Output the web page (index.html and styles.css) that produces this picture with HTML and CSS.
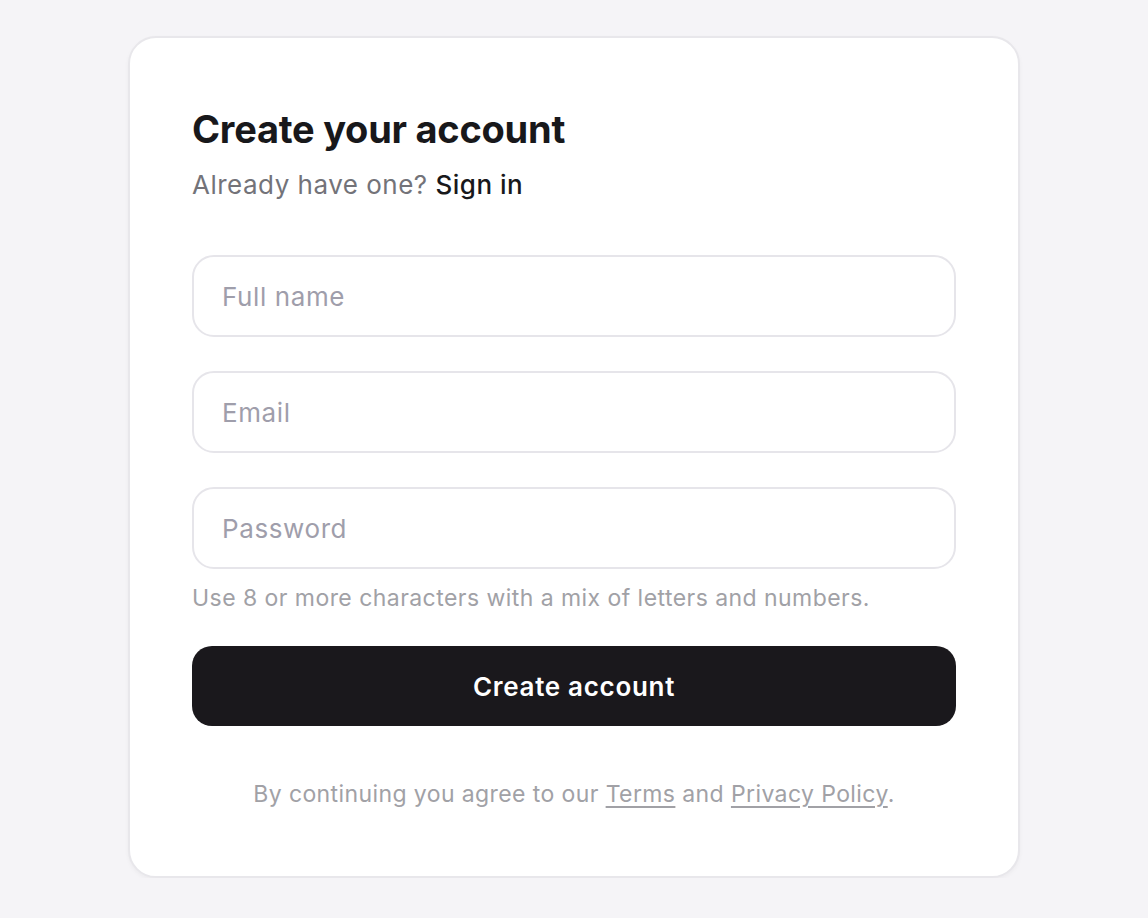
FILE: index.html
```html
<!DOCTYPE html>
<html lang="en">
<head>
<meta charset="utf-8">
<title>Create your account</title>
<link rel="stylesheet" href="styles.css">
</head>
<body>
<main class="card">
  <h1 class="title">Create your account</h1>
  <p class="subtitle">Already have one? <a class="signin" href="#">Sign in</a></p>
  <form class="form">
    <input class="field" type="text" placeholder="Full name">
    <input class="field" type="email" placeholder="Email">
    <div class="password-group">
      <input class="field" type="password" placeholder="Password">
      <p class="hint">Use 8 or more characters with a mix of letters and numbers.</p>
    </div>
    <button class="submit" type="button">Create account</button>
  </form>
  <p class="legal">By continuing you agree to our <a href="#">Terms</a> and <a href="#">Privacy Policy</a>.</p>
</main>
</body>
</html>
```
FILE: styles.css
```css
* { box-sizing: border-box; }
html, body { margin: 0; padding: 0; }
body {
  background: #f5f4f7;
  font-family: Inter, "Noto Sans", sans-serif;
  color: #18181b;
  -webkit-font-smoothing: antialiased;
}
.card {
  width: 892px;
  height: 842px;
  margin: 36px auto 0;
  background: #ffffff;
  border: 2px solid #e8e7eb;
  border-radius: 28px;
  padding: 68px 62px 0;
  box-shadow: 0 2px 4px rgba(20, 20, 30, 0.04);
}
.title {
  margin: 0;
  font-size: 38px;
  line-height: 46px;
  font-weight: 700;
  letter-spacing: -0.25px;
  color: #18181b;
}
.subtitle {
  margin: 16px 0 0;
  font-size: 26px;
  line-height: 34px;
  letter-spacing: 0.5px;
  color: #737379;
}
.signin {
  color: #18181b;
  font-weight: 500;
  text-decoration: none;
}
.form {
  display: flex;
  flex-direction: column;
  gap: 34px;
  margin-top: 53px;
}
.field {
  display: block;
  width: 100%;
  height: 82px;
  border: 2px solid #e6e5ea;
  border-radius: 22px;
  padding: 0 28px;
  font-family: inherit;
  font-size: 26px;
  letter-spacing: 0.6px;
  color: #18181b;
  background: #fff;
  outline: none;
}
.field::placeholder { color: #9f9eab; }
.password-group { display: flex; flex-direction: column; }
.hint {
  margin: 14px 0 0;
  font-size: 23px;
  line-height: 30px;
  letter-spacing: 0.45px;
  color: #a1a1a6;
}
.submit {
  margin-top: -1px;
  height: 80px;
  width: 100%;
  border: 0;
  border-radius: 20px;
  background: #1a181c;
  color: #fff;
  font-family: inherit;
  font-size: 26px;
  font-weight: 600;
  letter-spacing: 0.7px;
  cursor: pointer;
}
.legal {
  margin: 53px 0 0;
  text-align: center;
  font-size: 23px;
  line-height: 30px;
  letter-spacing: 0.4px;
  color: #a1a1a6;
}
.legal a {
  color: #a1a1a6;
  text-decoration: underline;
  text-underline-offset: 4px;
}
```
